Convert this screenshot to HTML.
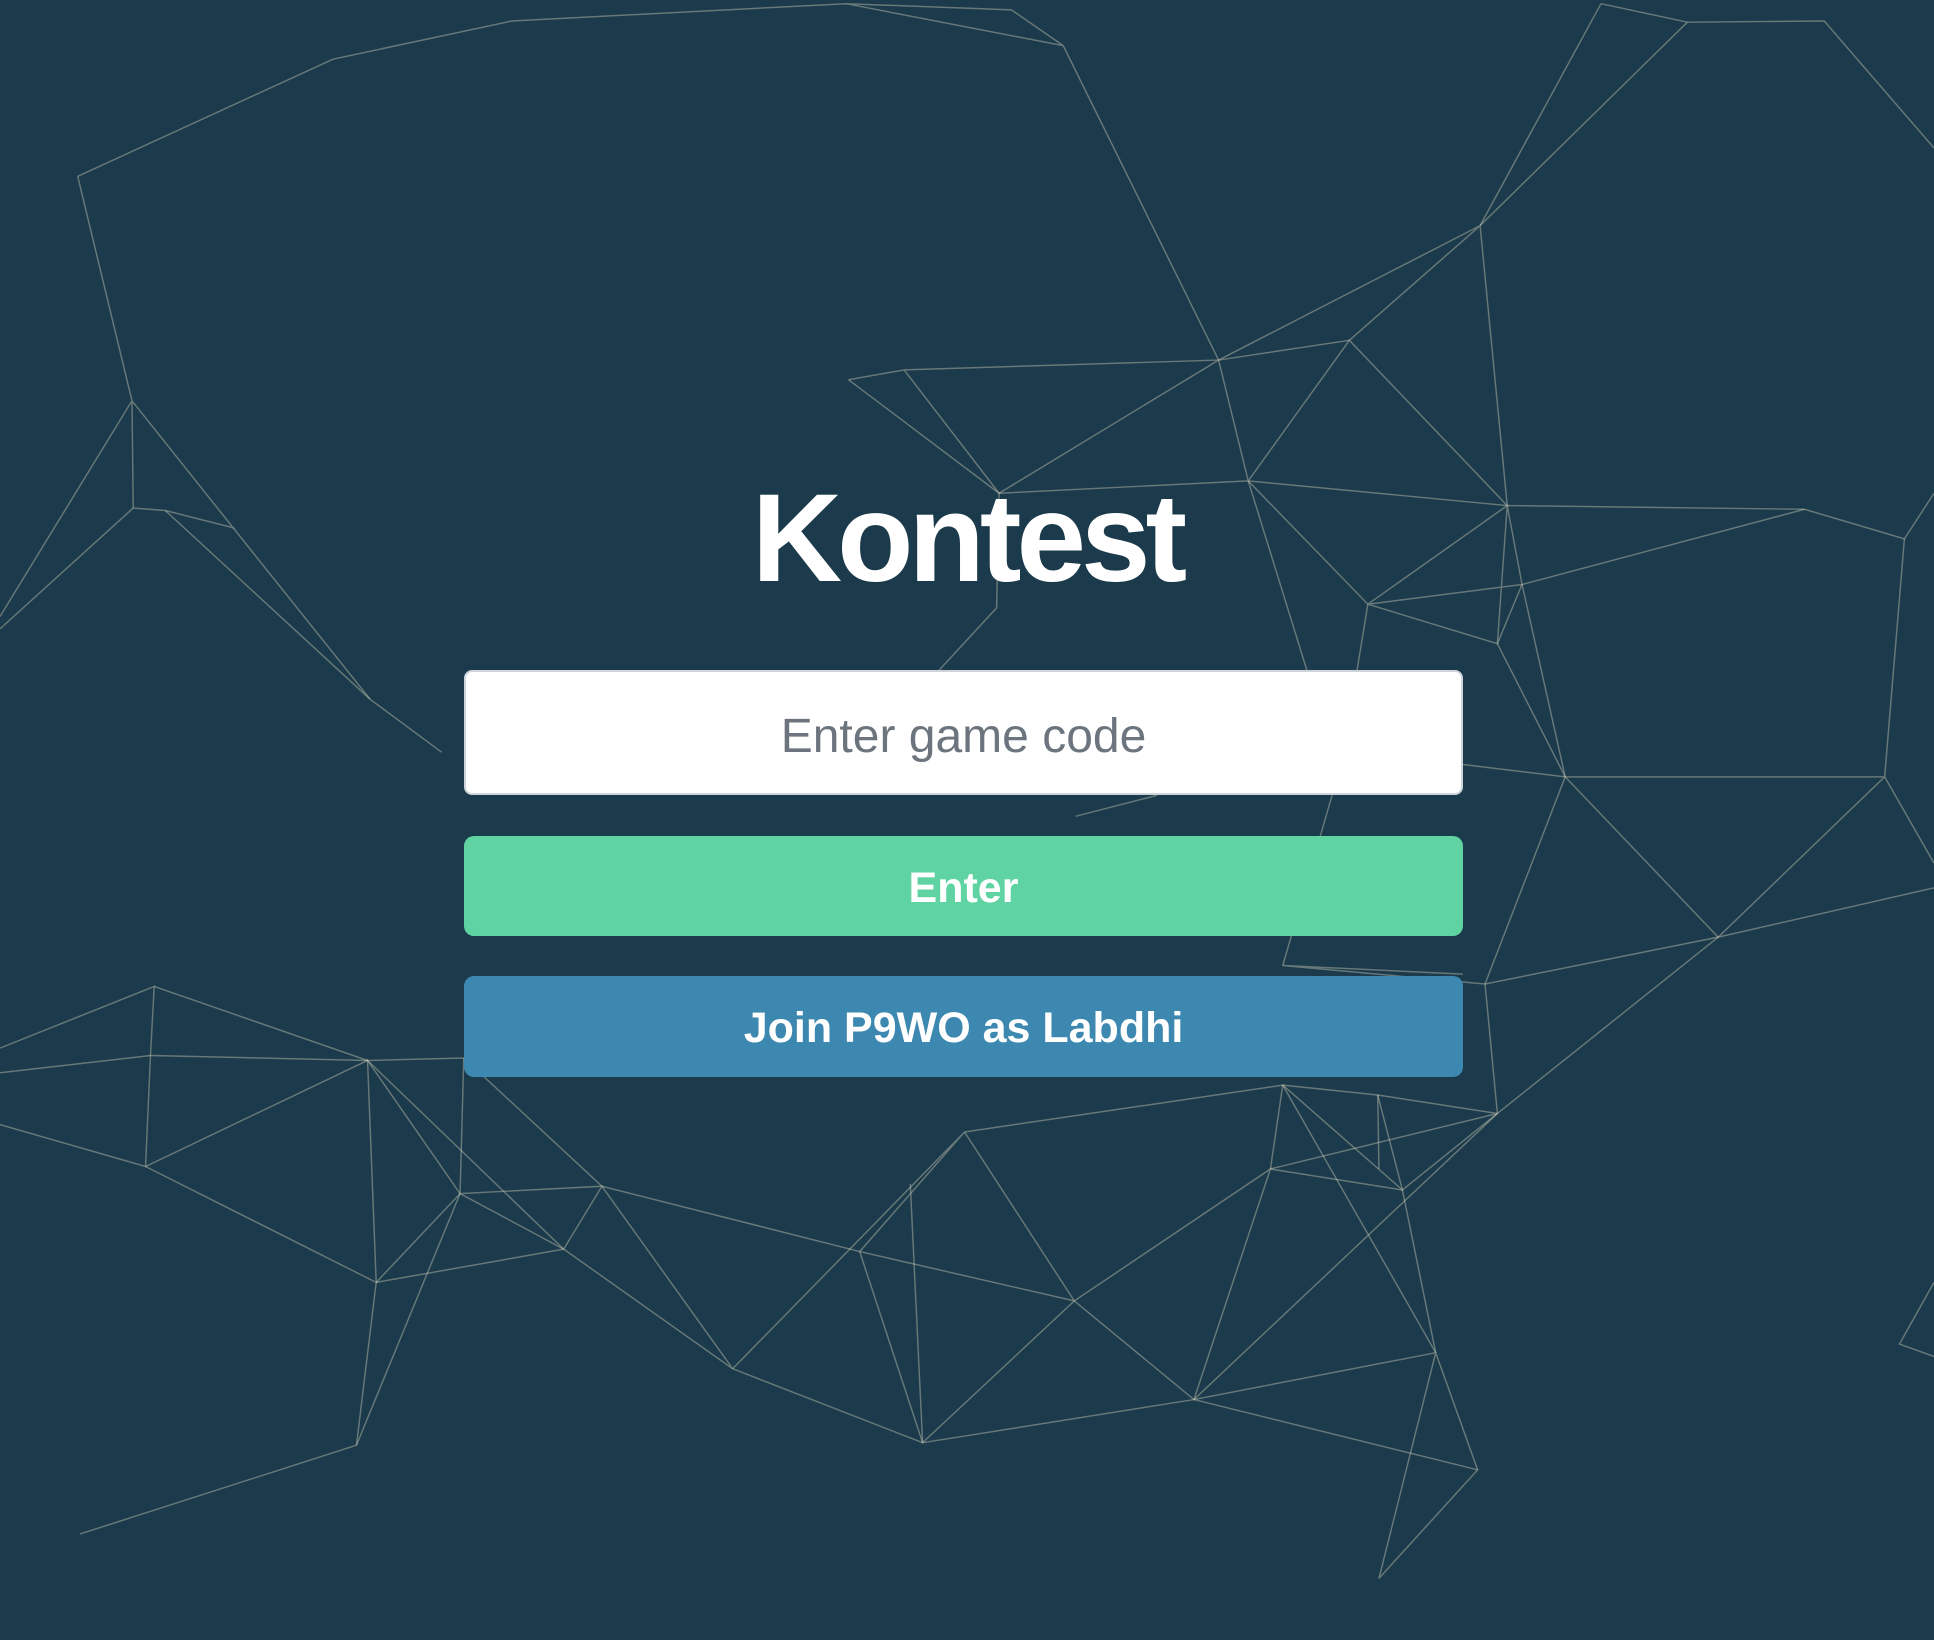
<!DOCTYPE html>
<html><head><meta charset="utf-8"><style>
html,body{margin:0;padding:0;}
body{width:1934px;height:1640px;background:#1b3a4b;position:relative;overflow:hidden;font-family:"Liberation Sans",sans-serif;}
svg.bg{position:absolute;left:0;top:0;width:1934px;height:1640px;}
.title{position:absolute;left:0;width:1934px;top:464px;text-align:center;color:#fff;font-weight:bold;font-size:125px;letter-spacing:-5px;line-height:150px;}
.inp{position:absolute;left:464px;top:670px;width:995px;height:121px;background:#fff;border:2px solid #ced4da;border-radius:8px;text-align:center;line-height:129px;font-size:48px;color:#6c757d;}
.btn{position:absolute;left:464px;width:999px;border-radius:10px;color:#fff;font-weight:bold;font-size:43px;text-align:center;}
.g{top:836px;height:100px;line-height:104px;background:#5fd3a2;}
.b{top:976px;height:101px;line-height:105px;background:#3d88b0;}
</style></head><body>
<svg class="bg" viewBox="0 0 1568 1330" preserveAspectRatio="none">
<g stroke="rgba(225,222,195,0.38)" stroke-width="1.2" fill="none">
<polyline points="63,143 270,48 415,17 686,3 820,8 862,37 686,3"/>
<polyline points="63,143 107,325 108,412 134,414 189,428 107,325 0,500"/>
<line x1="108" y1="412" x2="0" y2="510"/><polyline points="134,414 300,567 358,610"/><line x1="189" y1="428" x2="300" y2="567"/>
<line x1="862" y1="37" x2="988" y2="292"/>
<polyline points="1298,3 1368,18 1479,17 1568,120"/><line x1="1368" y1="18" x2="1200" y2="183"/><line x1="1298" y1="3" x2="1200" y2="183"/>
<polyline points="1200,183 1094,276 988,292 1200,183 1222,410"/>
<polyline points="688,308 733,300 810,400 988,292 733,300"/><line x1="688" y1="308" x2="810" y2="400"/>
<polyline points="988,292 1012,390 1094,276 1222,410 1012,390 810,400"/>
<polyline points="1012,390 1109,490 1222,410 1234,474 1109,490 1214,522 1222,410"/>
<polyline points="1234,474 1214,522 1269,630 1186,620"/><line x1="1234" y1="474" x2="1269" y2="630"/>
<polyline points="1222,410 1463,413 1544,437 1568,400"/><line x1="1463" y1="413" x2="1234" y2="474"/>
<polyline points="1544,437 1528,630 1269,630 1393,760 1528,630 1568,700"/>
<line x1="1393" y1="760" x2="1204" y2="798"/><line x1="1393" y1="760" x2="1568" y2="720"/>
<polyline points="1269,630 1204,798 1214,903 1137,965"/><polyline points="1204,798 1040,783 1186,790"/>
<polyline points="810,400 808,493 700,610"/><line x1="1109" y1="490" x2="1100" y2="545"/><line x1="1012" y1="390" x2="1060" y2="545"/>
<polyline points="872,662 938,645"/><line x1="1080" y1="645" x2="1040" y2="783"/>
<polyline points="0,912 118,946 122,856 125,800 0,850"/><polyline points="125,800 298,860 376,858"/>
<line x1="122" y1="856" x2="298" y2="860"/><line x1="118" y1="946" x2="298" y2="860"/><line x1="0" y1="870" x2="122" y2="856"/>
<polyline points="118,946 305,1040 298,860 373,968 488,962 457,1013 373,968"/>
<line x1="305" y1="1040" x2="373" y2="968"/><line x1="305" y1="1040" x2="457" y2="1013"/><line x1="298" y1="860" x2="457" y2="1013"/>
<line x1="376" y1="858" x2="373" y2="968"/><polyline points="376,858 488,962 594,1110 457,1013"/>
<polyline points="305,1040 289,1172 65,1244"/><line x1="289" y1="1172" x2="373" y2="968"/>
<polyline points="594,1110 782,918 697,1015 748,1170 871,1055 782,918"/>
<line x1="697" y1="1015" x2="871" y2="1055"/><line x1="738" y1="960" x2="748" y2="1170"/><line x1="594" y1="1110" x2="748" y2="1170"/>
<polyline points="871,1055 1030,948 968,1135 871,1055"/>
<polyline points="968,1135 1164,1097 1198,1192 1118,1280 1164,1097"/><line x1="968" y1="1135" x2="1198" y2="1192"/>
<polyline points="1030,948 1040,880 1117,888 1214,903 1030,948"/>
<polyline points="1117,888 1137,965 1030,948"/><line x1="1117" y1="888" x2="1118" y2="948"/><line x1="1040" y1="880" x2="1137" y2="965"/>
<line x1="1137" y1="965" x2="1164" y2="1097"/><line x1="1214" y1="903" x2="968" y2="1135"/>
<line x1="782" y1="918" x2="1040" y2="880"/><line x1="488" y1="962" x2="697" y2="1015"/><line x1="748" y1="1170" x2="968" y2="1135"/>
<line x1="1214" y1="903" x2="1393" y2="760"/><line x1="1040" y1="880" x2="1164" y2="1097"/>
<polyline points="1568,1040 1540,1090 1568,1100"/>
</g></svg>
<div class="title">Kontest</div>
<div class="inp">Enter game code</div>
<div class="btn g">Enter</div>
<div class="btn b">Join P9WO as Labdhi</div>
</body></html>
